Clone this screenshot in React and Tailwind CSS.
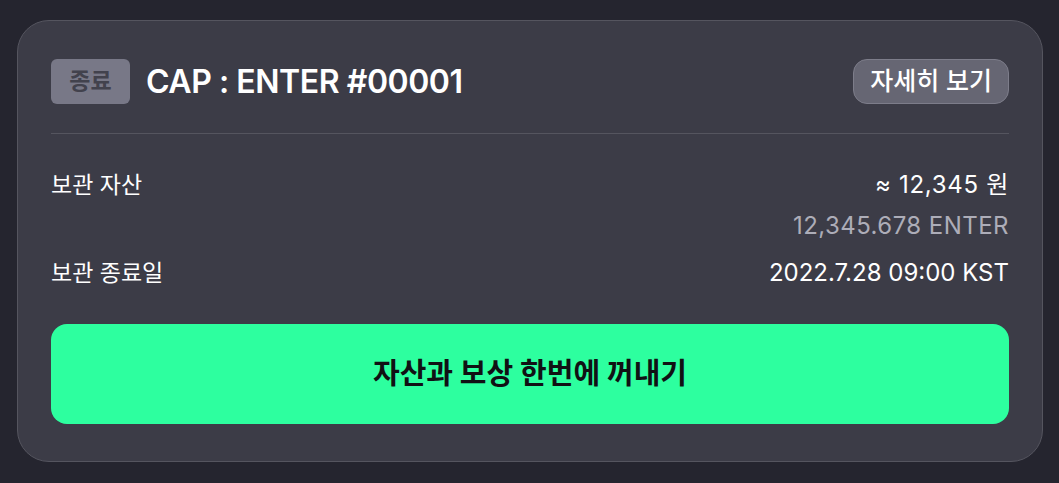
import React from "react";

export default function App() {
  const font = { fontFamily: "Inter, 'Noto Sans CJK KR', sans-serif" };
  return (
    <div className="w-[1059px] h-[483px] bg-[#25252f] pt-[20px] pl-[17px]" style={font}>
      <div className="w-[1026px] h-[442px] rounded-[32px] border border-[#55555f] bg-[#3c3c47] px-[33px] pt-[38px]">
        <div className="flex items-center justify-between h-[45px]">
          <div className="flex items-center">
            <div className="w-[79px] h-[45px] rounded-[6px] bg-[#787887] flex items-center justify-center text-[23px] font-semibold text-[#42424d]">
              종료
            </div>
            <div className="ml-[16px] text-[32px] font-semibold text-white tracking-[-0.45px]">CAP : ENTER #00001</div>
          </div>
          <div className="h-[45px] px-[16px] rounded-[14px] bg-[#666673] border border-[#7d7d8a] flex items-center text-[25px] font-medium text-white">
            자세히 보기
          </div>
        </div>
        <div className="mt-[29px] h-px bg-[#55555f]" />
        <div className="mt-[37px] flex justify-between leading-[28px] text-white">
          <div className="text-[23px]">보관 자산</div>
          <div className="flex flex-col items-end gap-[13px] text-[24px]">
            <div className="tracking-[0.7px]">≈ 12,345 원</div>
            <div className="text-[#adadb8] tracking-[0.45px]">12,345.678 ENTER</div>
          </div>
        </div>
        <div className="mt-[19px] flex justify-between leading-[28px] text-white">
          <div className="text-[23px]">보관 종료일</div>
          <div className="text-[24px]">2022.7.28 09:00 KST</div>
        </div>
        <div className="mt-[37px] h-[100px] rounded-[16px] bg-[#2dff9f] flex items-center justify-center text-[29px] font-bold text-[#111114]">
          자산과 보상 한번에 꺼내기
        </div>
      </div>
    </div>
  );
}
